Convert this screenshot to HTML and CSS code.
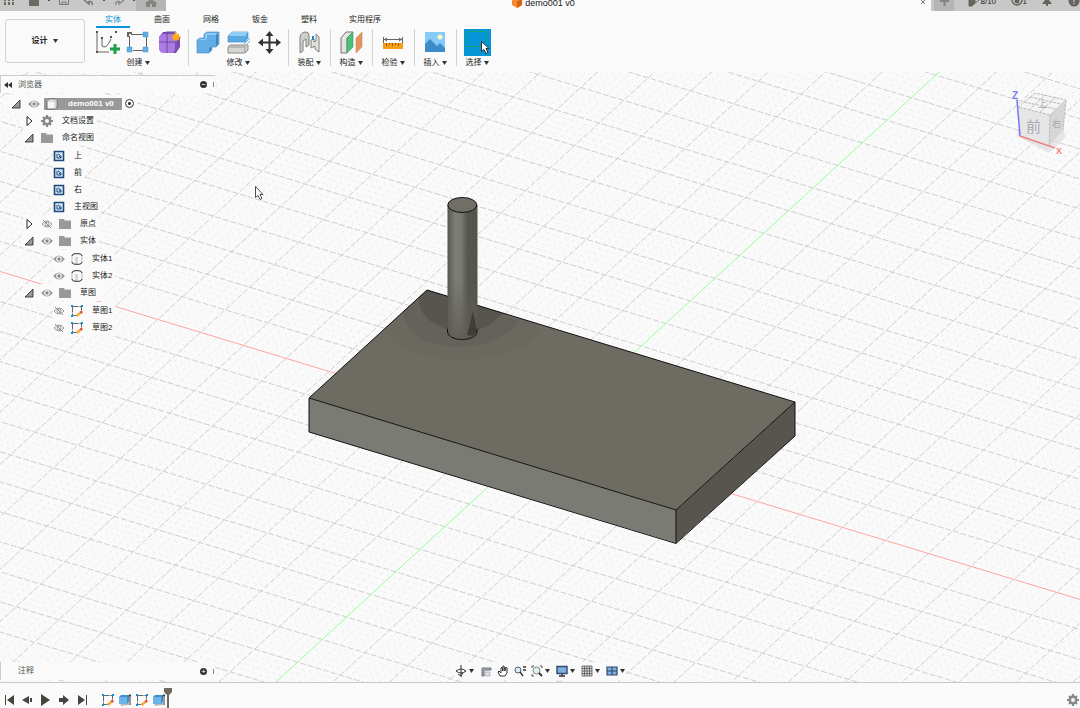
FILE: index.html
```html
<!DOCTYPE html>
<html lang="zh-CN">

<head>
  <meta charset="UTF-8" />
  <meta name="viewport" content="width=device-width, initial-scale=1.0" />
  <title>demo001 v0</title>
  <link rel="stylesheet" href="styles.css">
</head>

<body>
  <!-- Shared icons -->
  <svg class="defs" aria-hidden="true">
    <symbol id="eye" viewBox="0 0 12 12">
      <path d="M0 6Q6-1 12 6Q6 13 0 6Z" fill="#999" />
      <circle cx="6" cy="6" r="2.8" fill="#fafafa" />
      <circle cx="6" cy="6" r="1.7" fill="#888" />
    </symbol>
    <symbol id="eye-off" viewBox="0 0 12 12">
      <path d="M1 6Q6 0 11 6Q6 12 1 6Z" fill="none" stroke="#999" />
      <circle cx="6" cy="6" r="2" fill="none" stroke="#999" />
      <path d="M2 2L10 10" stroke="#888" />
    </symbol>
    <symbol id="folder" viewBox="0 0 12 12">
      <path d="M0 1h5l1 1h6v9H0z" fill="#999" />
      <path d="M5 2.500h7" stroke="#ccc" />
    </symbol>
    <symbol id="open" viewBox="0 0 12 12">
      <path d="M10 2v8H2z" fill="#999" stroke="#222" stroke-width=".8" />
    </symbol>
    <symbol id="closed" viewBox="0 0 12 12">
      <path d="M4 1.500v9l5-4.500z" fill="#fff" stroke="#222" />
    </symbol>
    <symbol id="gear" viewBox="0 0 12 12">
      <path d="M6 0v12M0 6h12M2 2l8 8M10 2l-8 8" stroke="#888" stroke-width="2.200" />
      <circle cx="6" cy="6" r="3.200" fill="#fafafa" stroke="#888" stroke-width="2.400" />
    </symbol>
    <symbol id="view" viewBox="0 0 12 12">
      <path d="M1.500 1.500h9v9h-9z" fill="#d5e5f4" stroke="#1d4a7a" stroke-width="1.600" />
      <path d="M4 4v4h4V6L5 4M6 6l2 2" fill="none" stroke="#1d4a7a" />
    </symbol>
    <symbol id="body" viewBox="0 0 12 12">
      <path d="M1 2v8M11 2v8" stroke="#bbb" />
      <path d="M4 4h3v7H4z" fill="#d5d7de" />
      <path d="M1 3Q1 1 4 .7h4Q11 1 11 3M1 9Q1 11 4 11.300h4Q11 11 11 9" fill="none" stroke="#333" />
    </symbol>
    <symbol id="sketch" viewBox="0 0 12 12">
      <path d="M1.500 1.500h9v5M1.500 1.500v9h5" fill="none" stroke="#666" stroke-dasharray="6 1" />
      <path d="M0 0h2v2H0zM10 0h2v2h-2zM0 10h2v2H0z" fill="#0696d7" />
      <path d="M5.500 11l5-4" stroke="#f0a93c" stroke-width="2.500" />
      <path d="M9.500 7.800l1.700-1.400" stroke="#e04848" stroke-width="2.500" />
    </symbol>
    <symbol id="extrude" viewBox="0 0 12 12">
      <path d="M2 12l8-1v-2H1z" fill="#bbb" />
      <path d="M0 10V3l2-2h8v7l-2 2z" fill="#3f8fcf" />
      <path d="M0 3h8v7H0z" fill="#6cb5ea" />
      <path d="M11 1v10M9.500 2.500L11 .5l1 2" stroke="#333" fill="none" />
    </symbol>
    <symbol id="caret" viewBox="0 0 6 4">
      <path d="M0 0h5L2.500 4z" fill="#333" />
    </symbol>
  </svg>

  <div class="topbar">
    <div class="quick">
      <button aria-label="数据面板"><svg viewBox="0 0 12 11"><path d="M1 0h2v1H1zM5 0h2v1H5zM9 0h2v1H9zM1 2h2v3H1zM5 2h2v3H5zM9 2h2v3H9z" fill="#6b6960" /></svg></button>
      <button aria-label="文件"><svg viewBox="0 0 12 11"><path d="M1 0h10v6H1z" fill="#6b6960" /></svg></button>
      <span class="speck"></span>
      <button aria-label="保存"><svg viewBox="0 0 12 11"><path d="M1.500 0v4.500h9V0M4 4V2h4v2" fill="none" stroke="#77756d" /></svg></button>
      <button aria-label="撤消"><svg viewBox="0 0 12 11"><path d="M1 0l5 4V1.500Q10 1 9 5" fill="none" stroke="#77756d" stroke-width="1.500" /></svg></button>
      <span class="speck"></span>
      <button aria-label="重做"><svg viewBox="0 0 12 11"><path d="M11 0L6 4V1.500Q2 1 3 5" fill="none" stroke="#8a8880" stroke-width="1.500" /></svg></button>
      <span class="speck"></span>
    </div>
    <button class="home" aria-label="主页"><svg viewBox="0 0 12 11"><path d="M0 3L6-1l6 4-1 1v3H7V4H5v3H1V4z" fill="#85837c" /></svg></button>
    <div class="document">
      <svg class="doc-icon" viewBox="0 0 12 11"><path d="M1 0h10v5L6 8 1 5z" fill="#f58a34" /><path d="M6 1l5-1v5L6 8z" fill="#d9600f" /></svg>
      <span>demo001 v0</span>
    </div>
    <button class="close" aria-label="关闭"><svg viewBox="0 0 6 6"><path d="M1 0l4 4M5 0L1 4" stroke="#777" /></svg></button>
    <div class="account">
      <button class="plus" aria-label="新建"><svg viewBox="0 0 12 11"><path d="M2 1h9M6.500 0v6" stroke="#85837c" stroke-width="2" /></svg></button>
      <button class="counter"><svg viewBox="0 0 12 11"><path d="M1 0h6v3L4 6H1zM6 4l5-4" fill="#66645c" stroke="#66645c" /></svg><span>8/10</span></button>
      <button class="counter"><svg viewBox="0 0 12 11"><path d="M1 0a5 5 0 0 0 10 0" fill="none" stroke="#66645c" stroke-width="1.500" /><circle cx="6" cy="1" r="2.500" fill="#66645c" /></svg><span>1</span></button>
      <button aria-label="通知"><svg viewBox="0 0 12 11"><path d="M4 0h4l3 4H1zM5 4h2v2H5z" fill="#66645c" /></svg></button>
      <button aria-label="帮助"><svg viewBox="0 0 12 11"><circle cx="6" cy="1" r="5.500" fill="#66645c" /><path d="M6 0v2M6 3v1" stroke="#ddd" /></svg></button>
    </div>
  </div>

  <div class="ribbon">
    <button class="workspace">设计 <svg class="caret"><use href="#caret" /></svg></button>
    <div class="tools">
      <div class="tabs">
        <button class="tab active">实体</button>
        <button class="tab">曲面</button>
        <button class="tab">网格</button>
        <button class="tab">钣金</button>
        <button class="tab">塑料</button>
        <button class="tab">实用程序</button>
      </div>
      <div class="groups">
        <div class="group wide">
          <div class="icons">
            <button aria-label="创建草图"><svg viewBox="0 0 27 27">
                <path d="M3 4v19h12M8 10v7q4 4 9-7" fill="none" stroke="#66645c" />
                <path d="M2 2h2v2H2zM21 2h2v2h-2zM7 8h2v2H7zM16 7h2v2h-2zM2 22h2v2H2z" fill="#55534c" />
                <path d="M16 20h10M21 15v10" stroke="#1e9e49" stroke-width="3" />
              </svg></button>
            <button aria-label="矩形"><svg viewBox="0 0 27 27">
                <path d="M6 5.500h13M4.500 7v12M8 21.500h10M21.500 8v10" fill="none" stroke="#66645c" />
                <path d="M2 3h5v2H4v3H2z" fill="#66645c" />
                <path d="M18 3h5v5h-5zM2 18h5v5H2zM18 18h5v5h-5z" fill="#62ade3" stroke="#4a94cc" stroke-width=".5" />
              </svg></button>
            <button aria-label="创建形状"><svg viewBox="0 0 27 27">
                <path d="M7 3h11l6 6v9l-4 6H7l-4-4V8z" fill="#7c50b3" />
                <path d="M3 9q1-4 5-4h8q3 1 3 5v9q0 5-4 5H8q-5 0-5-5z" fill="#aa7ce4" />
                <path d="M3 13h21M11 4v20M7 4l4-1h9M19 10l5-2" stroke="#70449f" fill="none" />
                <path d="M20 3v10M15 8h10M17 5l6 6M23 5l-6 6" stroke="#f5a21b" stroke-width="1.200" />
                <circle cx="20" cy="8" r="3" fill="#ffb019" />
              </svg></button>
          </div>
          <button class="label">创建<svg class="caret"><use href="#caret" /></svg></button>
        </div>
        <div class="group wide">
          <div class="icons">
            <button aria-label="合并"><svg viewBox="0 0 27 27">
                <path d="M3 11l3-2h4V5l3-2h12v12l-3 3h-4v3l-3 3H3z" fill="#62ade3" stroke="#4086bf" stroke-width=".6" />
                <path d="M4 11l2-1h5V5l3-1h10l-3 2h-8v4l-2 1z" fill="#8fccf6" />
                <path d="M22 6l2-2v11l-2 2zM15 19l2-1v3l-2 2z" fill="#3d86c2" />
              </svg></button>
            <button aria-label="分割"><svg viewBox="0 0 27 27">
                <path d="M3 13V7l4-4h16v6l-3 4z" fill="#5ba9e2" stroke="#3f86bf" stroke-width=".6" />
                <path d="M3 7l4-4h16l-3 4z" fill="#8fccf6" />
                <path d="M3 24v-6l2-2h18v5l-3 3z" fill="#d5d5d2" stroke="#77756f" stroke-width=".8" />
                <path d="M4 18h16v5" fill="none" stroke="#999" />
                <path d="M19 15l6-6M22 15l3-3" stroke="#62ade3" />
              </svg></button>
            <button aria-label="移动"><svg viewBox="0 0 27 27">
                <path d="M5 13.500h17M13.500 5v17" stroke="#333" stroke-width="2" />
                <path d="M13.500 2l4 5h-8zM13.500 25l4-5h-8zM2 13.500l5-4v8zM25 13.500l-5-4v8z" fill="#333" />
              </svg></button>
          </div>
          <button class="label">修改<svg class="caret"><use href="#caret" /></svg></button>
        </div>
        <div class="group">
          <div class="icons">
            <button aria-label="联接"><svg viewBox="0 0 27 27">
                <path d="M4 8q1-5 6-5 3 0 3 4v9l-3 2v-8l-3 2v10l-3 2z" fill="#cfcfcb" stroke="#77756d" stroke-width=".9" />
                <path d="M15 11l3-1v3l2-1V5l3 3v15l-4-3v-3l-4 2z" fill="#e2e2df" stroke="#77756d" stroke-width=".9" />
                <path d="M17 7v4" stroke="#1b84cc" stroke-width="2" />
              </svg></button>
          </div>
          <button class="label">装配<svg class="caret"><use href="#caret" /></svg></button>
        </div>
        <div class="group">
          <div class="icons">
            <button aria-label="偏移平面"><svg viewBox="0 0 27 27">
                <path d="M3 9l5-6h7l-6 6v15H3z" fill="#e4e4e1" stroke="#66645c" stroke-width=".9" />
                <path d="M9 9l6-6v15l-6 6z" fill="#4fc07a" stroke="#3a9b60" stroke-width=".6" />
                <path d="M18 9l6-6v15l-6 6z" fill="#e2955f" stroke="#d4875a" stroke-width=".6" />
              </svg></button>
          </div>
          <button class="label">构造<svg class="caret"><use href="#caret" /></svg></button>
        </div>
        <div class="group">
          <div class="icons">
            <button aria-label="测量"><svg viewBox="0 0 27 27">
                <path d="M3.500 8v6M22.500 8v6M4 10.500h18" stroke="#66645c" />
                <path d="M4 10.500l3-2v4zM22 10.500l-3-2v4z" fill="#66645c" />
                <path d="M3 14h20v6H3z" fill="#f59d14" />
                <path d="M6.500 14v3M9.500 14v2M12.500 14v3M15.500 14v2M18.500 14v3" stroke="#9b5b00" />
              </svg></button>
          </div>
          <button class="label">检验<svg class="caret"><use href="#caret" /></svg></button>
        </div>
        <div class="group">
          <div class="icons">
            <button aria-label="插入图像"><svg viewBox="0 0 27 27">
                <path d="M3 3h20v20H3z" fill="#86caf8" />
                <path d="M3 15l5-5 7 7 3-3 5 5v4H3z" fill="#3b8cc8" />
                <circle cx="18" cy="8" r="2.500" fill="#fff6c8" />
              </svg></button>
          </div>
          <button class="label">插入<svg class="caret"><use href="#caret" /></svg></button>
        </div>
        <div class="group">
          <div class="icons">
            <button class="selected" aria-label="选择"><svg viewBox="0 0 27 27">
                <path d="M3 2.500h19M2.500 3v15M3 17.500h14M22.500 3v10" stroke="#1ba85c" stroke-dasharray="3 1" />
                <path d="M17.500 12.500v10l2.500-2 2 4 2-1-2-4h3z" fill="#fff" stroke="#333" />
              </svg></button>
          </div>
          <button class="label">选择<svg class="caret"><use href="#caret" /></svg></button>
        </div>
      </div>
    </div>
  </div>

  <div class="viewport">
    <!-- 3D canvas -->
    <svg class="scene" viewBox="0 72 1080 610" preserveAspectRatio="xMinYMin slice">
      <defs>
        <linearGradient id="steel">
          <stop offset="0" stop-color="#5c5b54" />
          <stop offset=".12" stop-color="#6c6c65" />
          <stop offset=".25" stop-color="#7b7d76" />
          <stop offset=".45" stop-color="#7a7b74" />
          <stop offset=".58" stop-color="#66655d" />
          <stop offset=".68" stop-color="#56554f" />
          <stop offset="1" stop-color="#55544d" />
        </linearGradient>
        <linearGradient id="base-shade" x2="0" y2="1">
          <stop offset="0" stop-color="#5f5d56" stop-opacity="0" />
          <stop offset="1" stop-color="#5f5d56" stop-opacity=".9" />
        </linearGradient>
        <clipPath id="top-face"><path d="M427 290L795 402 676 510 309 398z" /></clipPath>
      </defs>
      <path id="minor-x" class="minor" />
      <path id="minor-y" class="minor" />
      <path id="major" class="major" />
      <path id="axis-x" stroke="#ffa3a3" />
      <path id="axis-y" stroke="#98fb98" />

      <path d="M427 290L795 402 676 510 309 398z" fill="#6e6b63" />
      <g clip-path="url(#top-face)">
        <path d="M385 310Q378 342 420 354 470 368 520 348 540 340 540 325L427 285z" fill="#6b6860" />
        <path d="M401 305Q404 330 425 341 460 352 492 341 510 333 520 322L427 285z" fill="#64625b" />
        <path d="M420 292Q416 312 432 322 445 331 465 333 485 330 495 320 503 314 506 309L427 285z" fill="#57554f" />
      </g>
      <path d="M309 398L676 510v33L309 432z" fill="#7a7b74" />
      <path d="M676 510L795 402v34L676 543z" fill="#57554e" />
      <path d="M427 290L795 402 676 510 309 398zM309 398v34L676 543.500 795 436v-34M676 510v33" class="edge" />
      <path d="M448 205v126a14.500 7.500 0 0 0 29 0V205z" fill="url(#steel)" />
      <path d="M448 280v51a14.500 7.500 0 0 0 29 0v-51z" fill="url(#base-shade)" />
      <path d="M473 311l4 20-4 5-6-1z" fill="#403c39" />
      <path d="M448 205v92M477 205v100" stroke="#55544e" />
      <path d="M447.500 329v3a14.700 7.500 0 0 0 29.500 0v-3" class="edge" />
      <ellipse cx="462.300" cy="205" rx="14.500" ry="7.500" fill="#706e66" stroke="#111" />

      <!-- View cube -->
      <path d="M1017 136l32 17 17-16-3-8-45 2z" fill="#ddd" opacity=".7" />
      <path d="M1018 107l17-14 31 7-16 15z" fill="#f4f4f4" />
      <path d="M1018 107l32 8-1 31-29-10z" fill="#e6e6e7" />
      <path d="M1050 115l16-15-3 30-14 16z" fill="#d6d6d6" />
      <path d="M1018 107l17-14 31 7-16 15zM1050 115l-1 31M1066 100l-3 30M1024 102l32 7M1030 97l31 7M1029 110l16-15M1040 112l16-15" class="cube-lines" />
      <text x="1026" y="132" class="cube-face">前</text>
      <text x="1038" y="107" class="cube-top">上</text>
      <text x="1052" y="127" class="cube-top">右</text>
      <path d="M1017 100l3 36" stroke="#7474f4" stroke-width="1.500" />
      <path d="M1020 136l35 12" stroke="#ee8585" stroke-width="1.500" />
      <text x="1012" y="99" class="axis-z">Z</text>
      <text x="1056" y="154" class="axis-label-x">X</text>

      <path d="M255.500 186.500v11l2.500-2 2 4 2-1-2-4h3z" fill="#fff" stroke="#222" stroke-width=".8" />
    </svg>

    <div class="browser">
      <div class="panel-head">
        <svg class="rewind" viewBox="0 0 8 6"><path d="M4 0v6L0 3zM8 0v6L4 3z" fill="#333" /></svg>
        <span class="panel-title">浏览器</span>
        <button class="dot" aria-label="折叠">−</button>
        <span class="grip"></span>
      </div>
      <ul class="tree">
        <li>
          <div class="row root">
            <svg><use href="#open" /></svg>
            <svg><use href="#eye" /></svg>
            <span class="doc"><svg viewBox="0 0 12 12"><path d="M1 3l2-2h8v8l-2 2H1z" fill="#f6f6f6" stroke="#555" stroke-width=".8" /><path d="M1 3h8v8M9 3l2-2" fill="none" stroke="#b6bcc6" /></svg>demo001 v0</span>
            <input type="radio" class="activate" aria-label="激活零部件" checked>
          </div>
        </li>
        <li><div class="row one"><svg><use href="#closed" /></svg><svg><use href="#gear" /></svg><span>文档设置</span></div></li>
        <li>
          <div class="row one"><svg><use href="#open" /></svg><svg><use href="#folder" /></svg><span>命名视图</span></div>
          <ul>
            <li><div class="row two"><svg><use href="#view" /></svg><span>上</span></div></li>
            <li><div class="row two"><svg><use href="#view" /></svg><span>前</span></div></li>
            <li><div class="row two"><svg><use href="#view" /></svg><span>右</span></div></li>
            <li><div class="row two"><svg><use href="#view" /></svg><span>主视图</span></div></li>
          </ul>
        </li>
        <li><div class="row one"><svg><use href="#closed" /></svg><svg><use href="#eye-off" /></svg><svg><use href="#folder" /></svg><span>原点</span></div></li>
        <li>
          <div class="row one"><svg><use href="#open" /></svg><svg><use href="#eye" /></svg><svg><use href="#folder" /></svg><span>实体</span></div>
          <ul>
            <li><div class="row two"><svg><use href="#eye" /></svg><svg><use href="#body" /></svg><span>实体1</span></div></li>
            <li><div class="row two"><svg><use href="#eye" /></svg><svg><use href="#body" /></svg><span>实体2</span></div></li>
          </ul>
        </li>
        <li>
          <div class="row one"><svg><use href="#open" /></svg><svg><use href="#eye" /></svg><svg><use href="#folder" /></svg><span>草图</span></div>
          <ul>
            <li><div class="row two"><svg><use href="#eye-off" /></svg><svg><use href="#sketch" /></svg><span>草图1</span></div></li>
            <li><div class="row two"><svg><use href="#eye-off" /></svg><svg><use href="#sketch" /></svg><span>草图2</span></div></li>
          </ul>
        </li>
      </ul>
    </div>

    <div class="bottom">
      <div class="panel-head comments">
        <span class="panel-title">注释</span>
        <button class="dot" aria-label="添加注释">+</button>
        <span class="grip"></span>
      </div>
      <div class="navbar">
        <button aria-label="动态观察"><svg viewBox="0 0 12 12"><path d="M6 0v12M1 6q5-4 10 0-5 4-10 0M3 9l3 2 2-3" fill="none" stroke="#333" /></svg><svg class="caret"><use href="#caret" /></svg></button>
        <button aria-label="观察方向"><svg viewBox="0 0 12 12"><path d="M2 3h9v2H4v6H2z" fill="#aeb6c2" stroke="#69717c" /><path d="M5 7h5v4H5z" fill="#dde1e8" stroke="#999" stroke-width=".6" /></svg></button>
        <button aria-label="平移"><svg viewBox="0 0 12 12"><path d="M3 11L1 7l1-1 2 2V3l1-1 1 4V1h1l1 5 1-4 1 1v5l-2 3z" fill="#fff" stroke="#333" /></svg></button>
        <button aria-label="缩放"><svg viewBox="0 0 12 12"><circle cx="4" cy="5" r="3" fill="#dce8f2" stroke="#4c6078" /><path d="M6 7l3 4M9 2h3M9 5h3" stroke="#333" stroke-width="1.400" /></svg></button>
        <button aria-label="适合窗口"><svg viewBox="0 0 12 12"><circle cx="5.500" cy="5.500" r="3.500" fill="#e5eff2" stroke="#788" /><path d="M8 8l3 3" stroke="#333" stroke-width="2" /><path d="M1 3V1h2M9 1h2v2M1 9v2h2" fill="none" stroke="#555" /></svg><svg class="caret"><use href="#caret" /></svg></button>
        <button aria-label="显示设置"><svg viewBox="0 0 12 12"><path d="M1 1.500h10v7H1z" fill="#7fb0df" stroke="#31496a" stroke-width="1.400" /><path d="M3 11h6M6 9v2" stroke="#333" stroke-width="1.400" /></svg><svg class="caret"><use href="#caret" /></svg></button>
        <button aria-label="栅格和捕捉"><svg viewBox="0 0 12 12"><path d="M1 1h10v10H1z" fill="#ddd" /><path d="M1 1v10M3.500 1v10M6 1v10M8.500 1v10M11 1v10M1 1h10M1 3.500h10M1 6h10M1 8.500h10M1 11h10" stroke="#555" stroke-width=".8" /></svg><svg class="caret"><use href="#caret" /></svg></button>
        <button aria-label="视口"><svg viewBox="0 0 12 12"><path d="M1 2h10v8H1z" fill="#7fb0df" stroke="#31496a" stroke-width="1.200" /><path d="M6 2v8M1 6h10" stroke="#31496a" stroke-width="1.200" /></svg><svg class="caret"><use href="#caret" /></svg></button>
      </div>
    </div>
  </div>

  <div class="timeline">
    <div class="player">
      <button aria-label="起点"><svg viewBox="0 0 12 12"><path d="M1 1h1v10H1zM10 1v10L3 6z" fill="#44433d" /></svg></button>
      <button aria-label="上一步"><svg viewBox="0 0 12 12"><path d="M7 2v8L0 6zM8 4h2v4H8z" fill="#44433d" /></svg></button>
      <button aria-label="播放"><svg viewBox="0 0 12 12"><path d="M1 0l9 6-9 6z" fill="#44433d" /></svg></button>
      <button aria-label="下一步"><svg viewBox="0 0 12 12"><path d="M1 4h4V1l6 5-6 5V8H1z" fill="#44433d" /></svg></button>
      <button aria-label="终点"><svg viewBox="0 0 12 12"><path d="M2 1v10l7-5zM10 1h1v10h-1z" fill="#44433d" /></svg></button>
    </div>
    <div class="history">
      <button aria-label="草图1"><svg><use href="#sketch" /></svg></button>
      <button aria-label="拉伸1"><svg><use href="#extrude" /></svg></button>
      <button aria-label="草图2"><svg><use href="#sketch" /></svg></button>
      <button aria-label="拉伸2"><svg><use href="#extrude" /></svg></button>
      <svg class="marker" viewBox="0 0 8 20"><path d="M0 0h8v4L5 7v13H3V7L0 4z" fill="#6b6960" /></svg>
    </div>
    <button class="settings" aria-label="设置"><svg><use href="#gear" /></svg></button>
  </div>

  <script src="grid.js"></script>
</body>

</html>
```
FILE: styles.css
```css
* {
  box-sizing: border-box;
}

body {
  margin: 0;
  height: 100vh;
  display: flex;
  flex-direction: column;
  overflow: hidden;
  background-color: #fafafa;
  color: #222;
  font-family: "Liberation Sans", "Noto Sans CJK SC", sans-serif;
  font-size: 8px;
  line-height: 12px;
}

button {
  display: flex;
  align-items: center;
  padding: 0;
  border: 0;
  background: none;
  color: inherit;
  font: inherit;
  cursor: pointer;
}

svg {
  display: block;
  flex-shrink: 0;
  width: 12px;
  height: 12px;
}

.defs {
  position: absolute;
  width: 0;
  height: 0;
}

.caret {
  width: 6px;
  height: 4px;
}

/* Top bar */
.topbar {
  display: flex;
  height: 11px;
  flex-shrink: 0;
  overflow: hidden;
}

.topbar svg {
  height: 11px;
}

.quick {
  display: flex;
  gap: 13px;
  width: 136px;
  padding-left: 3px;
  background-color: #c8c8c8;
}

.speck {
  width: 2px;
  height: 1px;
  margin: 0 -5px;
  background-color: #55534c;
}

.home {
  width: 30px;
  justify-content: center;
  background-color: #b5b5b5;
}

.document {
  flex: 1;
  display: flex;
  align-items: flex-start;
  justify-content: center;
  gap: 2px;
  font-size: 9px;
  line-height: 6px;
}

.topbar .close svg {
  width: 6px;
  height: 6px;
}

.close {
  align-items: flex-start;
  padding-right: 5px;
}

.account {
  display: flex;
  justify-content: space-between;
  width: 149px;
  padding-left: 3px;
  background-color: #c8c8c8;
}

.plus {
  width: 20px;
  justify-content: center;
  background-color: #b5b5b5;
}

.counter {
  align-items: flex-start;
  line-height: 4px;
}

/* Ribbon */
.ribbon {
  display: flex;
  gap: 4px;
  flex-shrink: 0;
  height: 61px;
  padding-left: 5px;
}

.workspace {
  width: 80px;
  height: 44px;
  margin-top: 8px;
  justify-content: center;
  gap: 5px;
  border: 1px solid #d2d2d2;
  border-radius: 3px;
  font-weight: bold;
}

.tabs {
  display: flex;
  gap: 15px;
  padding: 2px 0 0 7px;
}

.tab {
  justify-content: center;
  min-width: 34px;
  height: 15px;
  border-bottom: 2px solid transparent;
}

.tab.active {
  border-color: #0696d7;
  color: #0696d7;
}

.tab:last-child {
  margin-left: 7px;
}

.groups {
  display: flex;
  padding-top: 1px;
}

.group {
  height: 37px;
  padding: 0 7px;
  border-right: 1px solid #d2d2d2;
}

.group.wide {
  padding: 0 5px;
}

.group:last-child {
  border: 0;
}

.icons {
  display: flex;
  gap: 4px;
}

.icons svg {
  width: 27px;
  height: 27px;
}

.selected {
  background-color: #0696d7;
}

.label {
  gap: 2px;
  margin: 1px auto 0;
  white-space: nowrap;
}

/* Canvas */
.viewport {
  position: relative;
  flex: 1;
  min-height: 0;
  display: flex;
  flex-direction: column;
  justify-content: space-between;
}

.scene {
  position: absolute;
  width: 100%;
  height: 100%;
  fill: none;
}

.major {
  stroke: #cecece;
  stroke-dasharray: 6 2;
}

.minor {
  stroke: #ececec;
  stroke-dasharray: 2 5;
}

.edge {
  fill: none;
  stroke: #111;
}

.cube-lines {
  stroke: #bbb;
  stroke-dasharray: 3 1;
}

.cube-face {
  fill: #a8abb3;
  font-size: 15px;
}

.cube-top {
  fill: #aaa;
  font-size: 9px;
}

.axis-z {
  fill: #8080f5;
  font-size: 10px;
  font-weight: bold;
}

.axis-label-x {
  fill: #f58080;
  font-size: 9px;
  font-weight: bold;
}

/* Browser panel */
.browser {
  position: relative;
  width: 215px;
  padding-top: 3px;
}

.panel-head {
  display: flex;
  align-items: center;
  width: 215px;
  height: 18px;
  padding-left: 3px;
  border-top: 1px solid #ccc;
  border-left: 1px solid #ccc;
  background-color: #fafafa;
}

.rewind {
  width: 8px;
  height: 6px;
}

.panel-title {
  flex: 1;
  margin-left: 6px;
  color: #555;
}

.dot {
  justify-content: center;
  width: 7px;
  height: 7px;
  border-radius: 50%;
  background-color: #333;
  color: #fff;
  line-height: 7px;
}

.grip {
  width: 1px;
  height: 5px;
  margin: 0 1px 0 6px;
  background-color: #888;
}

.tree,
.tree ul {
  margin: 0;
  padding: 0;
  list-style: none;
}

.tree {
  padding-top: 2px;
}

.tree ul {
  margin-top: 1px;
}

.row {
  display: flex;
  align-items: center;
  gap: 6px;
  width: fit-content;
  height: 17px;
  padding-right: 3px;
  background-color: #fafafa;
}

.row > span {
  margin-left: 3px;
  padding-top: 1px;
}

.root {
  margin-left: 10px;
}

.one {
  margin-left: 23px;
}

.two {
  margin-left: 53px;
}

.root .doc {
  display: flex;
  align-items: center;
  gap: 10px;
  margin-left: -2px;
  padding: 0 8px 0 2px;
  background-color: #999;
  color: #fff;
  font-weight: bold;
}

.activate {
  appearance: none;
  width: 9px;
  height: 9px;
  margin: 0 0 0 -3px;
  border: 1px solid #333;
  border-radius: 50%;
  background: radial-gradient(#333 1px, #fafafa 2px);
}

/* Comments and navigation */
.bottom {
  position: relative;
  display: grid;
  grid-template-columns: 1fr auto 1fr;
  padding-bottom: 2px;
}

.comments {
  border-top: 0;
  padding-left: 11px;
}

.navbar {
  display: flex;
  gap: 5px;
  background-color: #fafafa;
}

.navbar button {
  gap: 2px;
}

/* Timeline */
.timeline {
  display: flex;
  align-items: center;
  flex-shrink: 0;
  height: 26px;
  padding: 8px 1px 0 4px;
  border-top: 1px solid #c8c8c8;
}

.player {
  display: flex;
  gap: 6px;
}

.history {
  display: flex;
  gap: 5px;
  flex: 1;
  margin-left: 14px;
}

.marker {
  width: 8px;
  height: 20px;
  margin: -6px 0 -2px -6px;
}
```
FILE: grid.js
```javascript
// Ground grid: one cell is (ax, ay) along X and (bx, by) along Y
const origin = { x: 543, y: 436.4 };
const a = { x: 42.8, y: 13 };
const b = { x: 24.55, y: -22.58 };

function line(i, dir, step) {
  const x = origin.x + step.x * i;
  const y = origin.y + step.y * i;
  const n = 40;
  return `M${x - dir.x * n} ${y - dir.y * n}L${x + dir.x * n} ${y + dir.y * n}`;
}

let major = "";
let minorX = "";
let minorY = "";
for (let i = -30; i <= 30; i++) {
  if (i !== 0) major += line(i, a, b) + line(i, b, a);
  for (let j = 1; j < 5; j++) {
    minorX += line(i + j / 5, a, b);
    minorY += line(i + j / 5, b, a);
  }
}

document.getElementById("major").setAttribute("d", major);
document.getElementById("minor-x").setAttribute("d", minorX);
document.getElementById("minor-y").setAttribute("d", minorY);
document.getElementById("axis-x").setAttribute("d", line(0, a, b));
document.getElementById("axis-y").setAttribute("d", line(0, b, a));
```
